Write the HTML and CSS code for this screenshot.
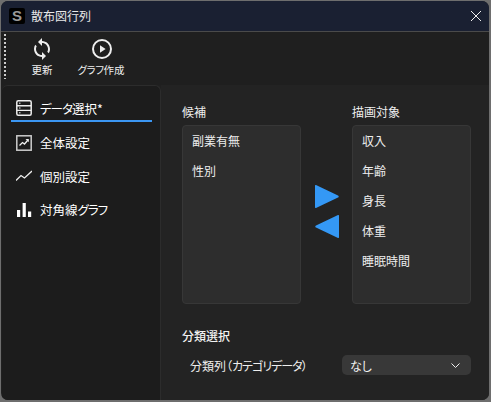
FILE: index.html
```html
<!DOCTYPE html>
<html lang="ja">
<head>
<meta charset="utf-8">
<title>散布図行列</title>
<link rel="stylesheet" href="styles.css">
</head>
<body>
<div class="window">
  <header class="titlebar">
    <span class="logo">S</span>
    <span class="title">散布図行列</span>
    <svg class="close" viewBox="0 0 10 10" width="10" height="10"><path d="M0 0l10 10M10 0L0 10" stroke="#f0f0f0" stroke-width="1" fill="none"/></svg>
  </header>
  <div class="toolbar">
    <div class="grip"></div>
    <div class="tool tool-update">
      <svg viewBox="3 1 18 22" width="18" height="22"><path fill="#eee" d="M12 4V1L8 5l4 4V6c3.31 0 6 2.69 6 6 0 1.01-.25 1.97-.7 2.8l1.46 1.46C19.54 15.03 20 13.57 20 12c0-4.42-3.58-8-8-8zm0 14c-3.31 0-6-2.69-6-6 0-1.01.25-1.97.7-2.8L5.24 7.74C4.46 8.97 4 10.43 4 12c0 4.42 3.58 8 8 8v3l4-4-4-4v3z"/></svg>
      <span>更新</span>
    </div>
    <div class="tool tool-graph">
      <svg viewBox="2 1 20 22" width="20" height="22"><circle cx="12" cy="12" r="9" fill="none" stroke="#eee" stroke-width="2"/><path d="M10 8.3v7.4l5.6-3.7z" fill="#eee"/></svg>
      <span class="tool-graph-label"><span class="kana-tight">グラフ</span>作成</span>
    </div>
  </div>
  <div class="body">
    <nav class="side">
      <div class="nav-item active">
        <svg viewBox="0 0 16 16" width="16" height="16"><rect x=".8" y=".8" width="14.4" height="14.4" rx="1.5" fill="none" stroke="#eee" stroke-width="1.5"/><path d="M1 5.7h14M1 10.4h14" stroke="#eee" stroke-width="1.4"/><path d="M3 3.2h1.5M3 8h1.5M3 12.8h1.5" stroke="#eee" stroke-width="1"/></svg>
        <span><span class="kana">データ</span>選択*</span>
      </div>
      <div class="nav-item">
        <svg viewBox="0 0 16 16" width="16" height="16"><rect x=".8" y=".8" width="14.4" height="14.4" fill="none" stroke="#ccc" stroke-width="1.5"/><path d="M3.5 10.5l3-3 2 1.5 3.5-4" fill="none" stroke="#eee" stroke-width="1.3"/><path d="M9.5 4h3.3v3.3z" fill="#eee"/></svg>
        <span>全体設定</span>
      </div>
      <div class="nav-item">
        <svg viewBox="0 0 16 16" width="16" height="16"><path d="M0 12.5l5-5 3.5 2.5L16 3" fill="none" stroke="#eee" stroke-width="1.3"/></svg>
        <span>個別設定</span>
      </div>
      <div class="nav-item">
        <svg viewBox="0 0 16 16" width="16" height="16"><path d="M1 8h3.2v7H1zM6.6 1h3.2v14H6.6zM12 9.5h3.2V15H12z" fill="#fff"/></svg>
        <span>対角線<span class="kana">グラフ</span></span>
      </div>
    </nav>
    <main class="content">
      <div class="transfer">
        <div class="col">
          <div class="col-label">候補</div>
          <div class="listbox">
            <div class="li">副業有無</div>
            <div class="li">性別</div>
          </div>
        </div>
        <div class="arrows">
          <svg viewBox="0 0 24 23" width="24" height="23"><path d="M1.500.2 23 10.400a1.200 1.200 0 0 1 0 2.200L1.500 22.800A1 1 0 0 1 0 22V1A1 1 0 0 1 1.500.2z" fill="#3498f5"/></svg>
          <svg viewBox="0 0 24 23" width="24" height="23"><path d="M22.500.2 1 10.400a1.200 1.200 0 0 0 0 2.200l21.500 10.200A1 1 0 0 0 24 22V1A1 1 0 0 0 22.500.2z" fill="#3498f5"/></svg>
        </div>
        <div class="col">
          <div class="col-label">描画対象</div>
          <div class="listbox">
            <div class="li">収入</div>
            <div class="li">年齢</div>
            <div class="li">身長</div>
            <div class="li">体重</div>
            <div class="li">睡眠時間</div>
          </div>
        </div>
      </div>
      <div class="section">分類選択</div>
      <div class="form-row">
        <span class="form-label">分類列（<span class="kana">カテゴリデータ</span>）</span>
        <div class="select">
          <span>なし</span>
          <svg viewBox="0 0 9 5" width="9" height="5"><path d="M.5.5l4 4 4-4" fill="none" stroke="#eee" stroke-width="1"/></svg>
        </div>
      </div>
    </main>
  </div>
</div>
</body>
</html>
```
FILE: styles.css
```css
* { box-sizing: border-box; }
html, body { margin: 0; height: 100%; background: #6e6e6e; }
body { padding: 1px 2px 2px 1px; overflow: hidden; }
.window {
  height: 399px; background: #202020; border-radius: 7px; overflow: hidden;
  display: flex; flex-direction: column; color: #f2f2f2;
  font: 12px "Noto Sans CJK JP", "Noto Sans", sans-serif;
  font-feature-settings: "palt";
}
.kana { letter-spacing: -1px; }
.kana-tight { letter-spacing: -.4px; }
.titlebar {
  height: 31px; flex: none; background: #1a2032; border-bottom: 1px solid #4a4a4a;
  display: flex; align-items: center; padding: 0 8px 1px 8px;
}
.logo {
  width: 16px; height: 16px; background: #000; color: #999; border-radius: 2px;
  font: bold 15px/16px "Liberation Sans", sans-serif; text-align: center; margin-right: 6px;
}
.title { font-size: 12px; color: #e8e8e8; flex: 1; }
.toolbar { height: 53px; flex: none; display: flex; background: #1f1f1f; }
.grip { width: 2px; height: 45px; margin: 2px 0 0 3px; background-image: linear-gradient(#ccc 50%, transparent 50%); background-size: 2px 4px; }
.tool { display: flex; flex-direction: column; align-items: center; font-size: 10.5px; color: #eee; padding-top: 6px; gap: 3px; line-height: 14px; }
.tool-update { width: 36px; margin-left: 18px; }
.tool-graph { width: 56px; margin-left: 14px; }
.tool-graph-label { margin-right: 2px; }
.body { flex: 1; display: flex; min-height: 0; }
.side {
  width: 159px; flex: none; background: #1c1c1c; border: 1px solid #2c2c2c; border-left: 0; border-bottom: 0;
  border-radius: 6px 6px 0 0; padding: 0 8px 0 9px; margin-left: 1px;
}
.nav-item { height: 33.5px; display: flex; align-items: center; gap: 8px; padding-left: 5px; font-size: 12.5px; color: #fff; }
.nav-item.active { height: 36px; padding-top: 10px; border-bottom: 2px solid #3b96f2; margin-bottom: 4px; }
.content { flex: 1; background: #232323; padding: 18px 18px 0 21px; min-width: 0; }
.transfer { display: flex; align-items: stretch; }
.col { width: 119px; flex: none; }
.col-label { font-size: 12px; line-height: 17px; margin-bottom: 5px; color: #eee; }
.listbox { height: 179px; background: #2d2d2d; border: 1px solid #373737; border-radius: 4px; padding: 5px 9px; }
.li { height: 30px; line-height: 20px; font-size: 12px; color: #eee; }
.arrows { width: 51px; flex: none; display: flex; flex-direction: column; align-items: center; justify-content: flex-start; padding-top: 82px; gap: 7px; }
.section { margin-top: 23px; font-size: 12px; font-weight: 500; line-height: 17px; color: #f2f2f2; }
.form-row { display: flex; align-items: center; justify-content: space-between; margin-top: 11px; padding-left: 8px; }
.form-label { font-size: 12px; color: #eee; }
.select { width: 129px; height: 20px; background: #383838; border-radius: 5px; display: flex; align-items: center; justify-content: space-between; padding: 0 11px 0 8px; font-size: 12px; }
```
